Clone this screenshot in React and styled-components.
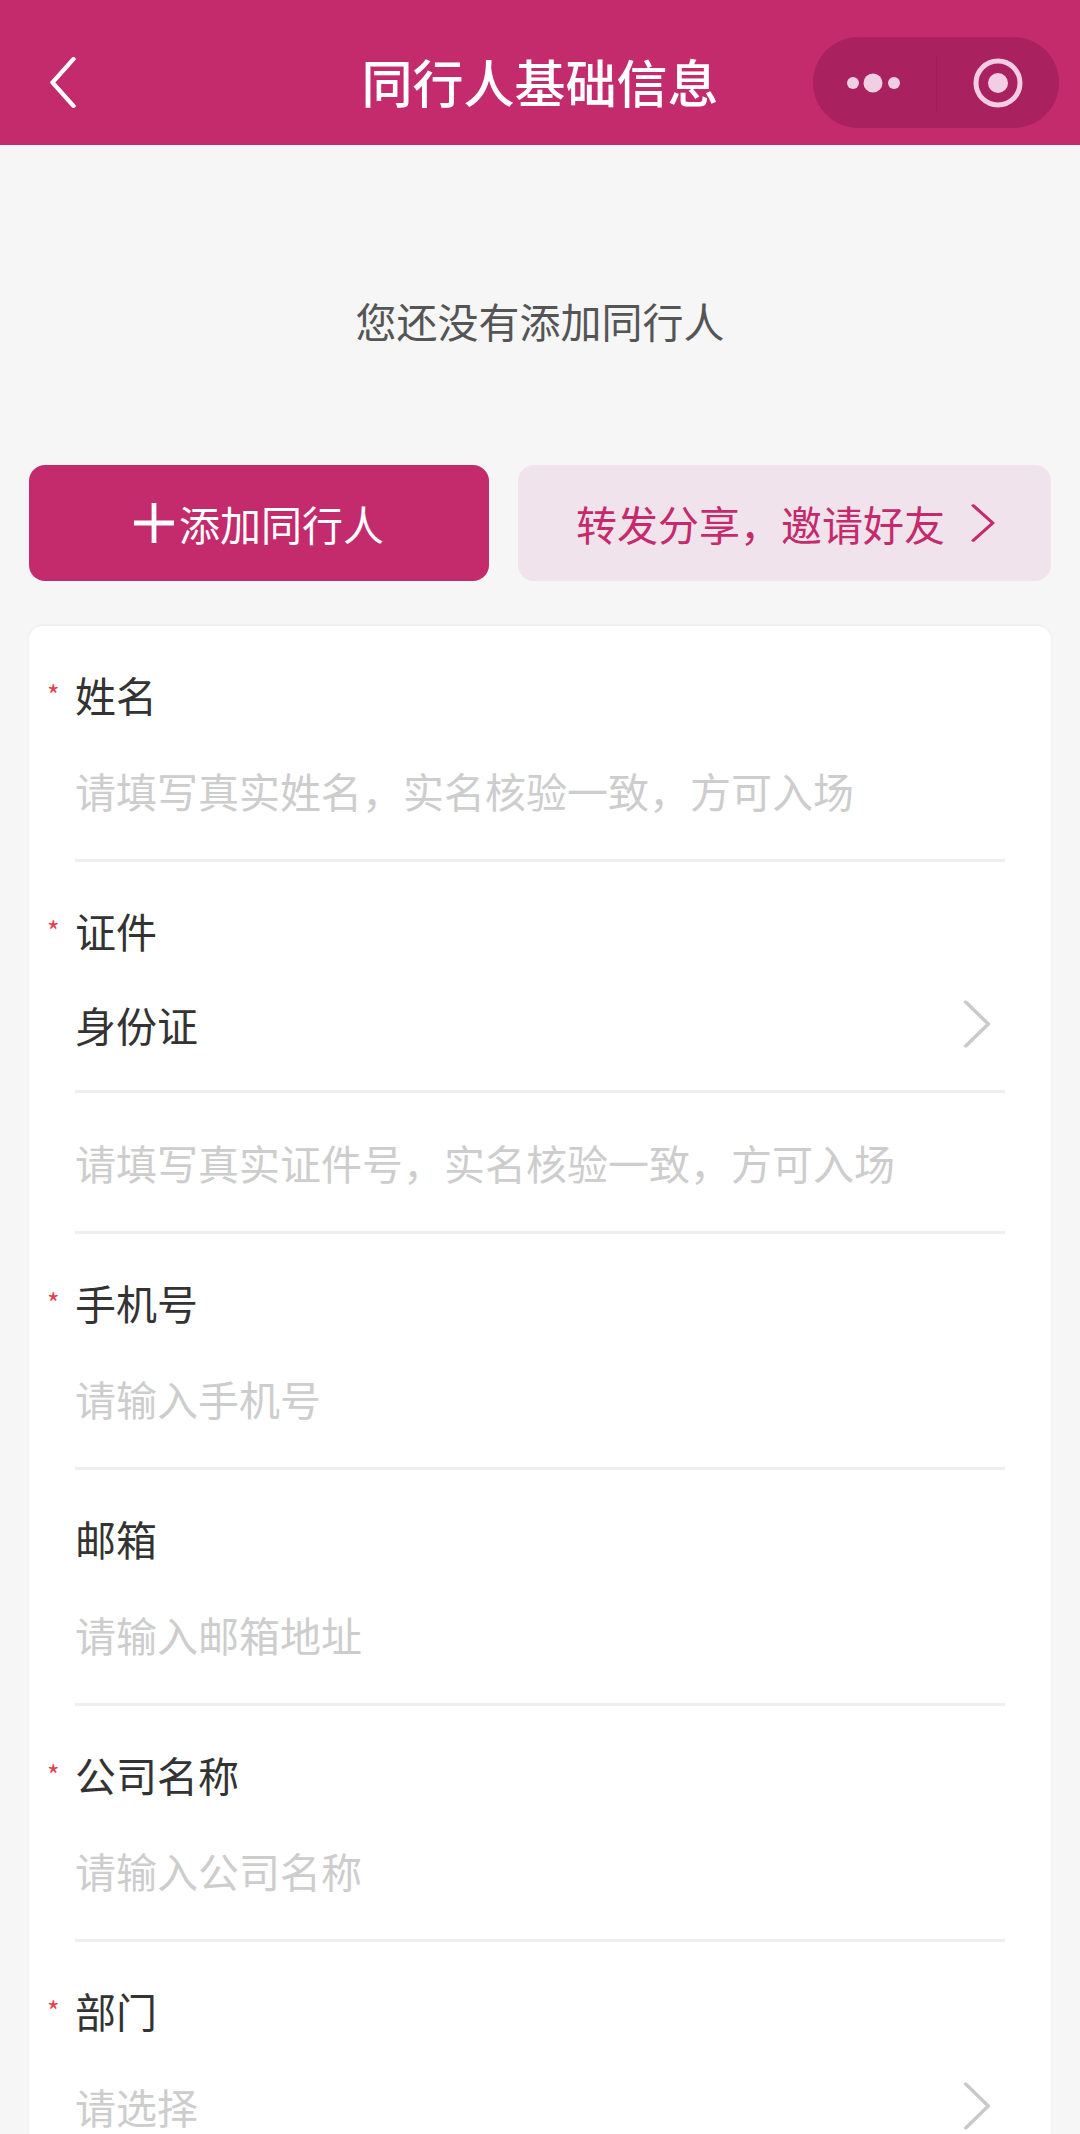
import styled, { createGlobalStyle } from "styled-components";

const GlobalStyle = createGlobalStyle`
  html, body {
    margin: 0;
    padding: 0;
    overflow: hidden;
    background: #f6f6f6;
    font-family: "Noto Sans CJK SC", "Noto Sans", sans-serif;
  }
`;

const fields = [
  { label: "姓名", required: true, placeholder: "请填写真实姓名，实名核验一致，方可入场" },
  { label: "证件", required: true, value: "身份证", select: true },
  { placeholder: "请填写真实证件号，实名核验一致，方可入场" },
  { label: "手机号", required: true, placeholder: "请输入手机号" },
  { label: "邮箱", placeholder: "请输入邮箱地址" },
  { label: "公司名称", required: true, placeholder: "请输入公司名称" },
  { label: "部门", required: true, placeholder: "请选择", select: true },
];

function Chevron({ width, height, color, strokeWidth, flip }) {
  const points = flip ? "21,2 3,24.5 21,47" : "3,2 21,24.5 3,47";
  return (
    <svg width={width} height={height} viewBox="0 0 24 49" preserveAspectRatio="none">
      <polyline
        points={points}
        fill="none"
        stroke={color}
        strokeWidth={strokeWidth}
        strokeLinecap="round"
        strokeLinejoin="round"
      />
    </svg>
  );
}

export default function App() {
  return (
    <>
      <GlobalStyle />
      <Page>
        <Header>
          <BackButton>
            <Chevron width={28} height={51} color="#fff" strokeWidth={3.8} flip />
          </BackButton>
          <Title>同行人基础信息</Title>
          <Capsule>
            <CapsuleCell>
              <svg width="62" height="24" viewBox="0 0 62 24">
                <circle cx="10" cy="12" r="6" fill="#efcfe2" />
                <circle cx="30" cy="12" r="9.5" fill="#efcfe2" />
                <circle cx="51" cy="12" r="6" fill="#efcfe2" />
              </svg>
            </CapsuleCell>
            <CapsuleDivider />
            <CapsuleCell>
              <svg width="52" height="52" viewBox="0 0 52 52">
                <circle cx="26" cy="26" r="22" fill="none" stroke="#f3cde3" strokeWidth="5" />
                <circle cx="26" cy="26" r="10" fill="#f3cde3" />
              </svg>
            </CapsuleCell>
          </Capsule>
        </Header>

        <EmptyText>您还没有添加同行人</EmptyText>

        <Actions>
          <AddButton>
            <PlusIcon viewBox="0 0 42 42">
              <path d="M0 21H42M21 0V42" stroke="#fff" strokeWidth="5" />
            </PlusIcon>
            添加同行人
          </AddButton>
          <ShareButton>
            转发分享，邀请好友
            <Chevron width={26} height={38} color="#c42b6c" strokeWidth={3.4} />
          </ShareButton>
        </Actions>

        <Card>
          {fields.map((field, index) => (
            <Field key={index}>
              {field.label && (
                <Label>
                  {field.required && <Star>*</Star>}
                  {field.label}
                </Label>
              )}
              <Control $select={field.select && field.value}>
                {field.value ? (
                  <Value>{field.value}</Value>
                ) : (
                  <Placeholder>{field.placeholder}</Placeholder>
                )}
                {field.select && (
                  <Chevron width={30} height={48} color="#c9c9c9" strokeWidth={3} />
                )}
              </Control>
            </Field>
          ))}
        </Card>
      </Page>
    </>
  );
}

const Page = styled.div`
  display: flex;
  flex-direction: column;
  height: 2134px;
  overflow: hidden;
  background: #f6f6f6;
`;

const Header = styled.header`
  display: grid;
  flex: none;
  grid-template-columns: 1fr auto 1fr;
  align-items: center;
  box-sizing: border-box;
  height: 145px;
  padding: 37px 21px 17px;
  background: #c42b6c;
`;

const BackButton = styled.div`
  display: flex;
  justify-self: start;
  margin-left: 28px;
`;

const Title = styled.h1`
  margin: 0 0 2px;
  color: #fff;
  font-size: 51px;
  font-weight: 500;
  line-height: 89px;
`;

const Capsule = styled.div`
  display: flex;
  justify-self: end;
  align-items: center;
  width: 246px;
  height: 91px;
  border-radius: 46px;
  background: #a9215e;
`;

const CapsuleCell = styled.div`
  display: flex;
  flex: 1;
  align-items: center;
  justify-content: center;
`;

const CapsuleDivider = styled.div`
  flex: none;
  width: 1px;
  height: 56px;
  background: #9d1f57;
`;

const EmptyText = styled.p`
  flex: none;
  box-sizing: border-box;
  height: 320px;
  margin: 0;
  padding-top: 146px;
  color: #555;
  font-size: 41px;
  line-height: 58px;
  text-align: center;
`;

const Actions = styled.div`
  display: grid;
  flex: none;
  grid-template-columns: 460px 533px;
  gap: 29px;
  margin-bottom: 45px;
  padding: 0 29px;
`;

const AddButton = styled.div`
  display: flex;
  align-items: center;
  justify-content: center;
  gap: 5px;
  height: 116px;
  border-radius: 16px;
  background: #c42b6c;
  color: #fff;
  font-size: 41px;
`;

const PlusIcon = styled.svg`
  width: 40px;
  height: 42px;
`;

const ShareButton = styled.div`
  display: flex;
  align-items: center;
  justify-content: center;
  gap: 25px;
  box-sizing: border-box;
  height: 116px;
  padding-left: 3px;
  border-radius: 16px;
  background: #f0e3ec;
  color: #c42b6c;
  font-size: 41px;
`;

const Card = styled.section`
  flex: 1;
  margin: 0 29px;
  padding: 0 46px;
  border-radius: 14px 14px 0 0;
  background: #fff;
  box-shadow: 0 -1px 3px rgba(0, 0, 0, 0.05);
`;

const Field = styled.div`
  display: flex;
  flex-direction: column;
`;

const Label = styled.div`
  position: relative;
  height: 50px;
  margin-top: 45px;
  color: #333;
  font-size: 41px;
  line-height: 47px;
`;

const Star = styled.span`
  position: absolute;
  top: 6px;
  left: -28px;
  color: #e3404f;
  font-size: 27px;
  line-height: 36px;
`;

const Control = styled.div`
  display: flex;
  align-items: center;
  justify-content: space-between;
  box-sizing: border-box;
  height: ${(props) => (props.$select ? "136px" : "141px")};
  padding-right: 13px;
  border-bottom: 3px solid #efefef;
  font-size: 41px;
  line-height: 50px;
`;

const Value = styled.span`
  color: #333;
`;

const Placeholder = styled.span`
  color: #cdcdcd;
`;
